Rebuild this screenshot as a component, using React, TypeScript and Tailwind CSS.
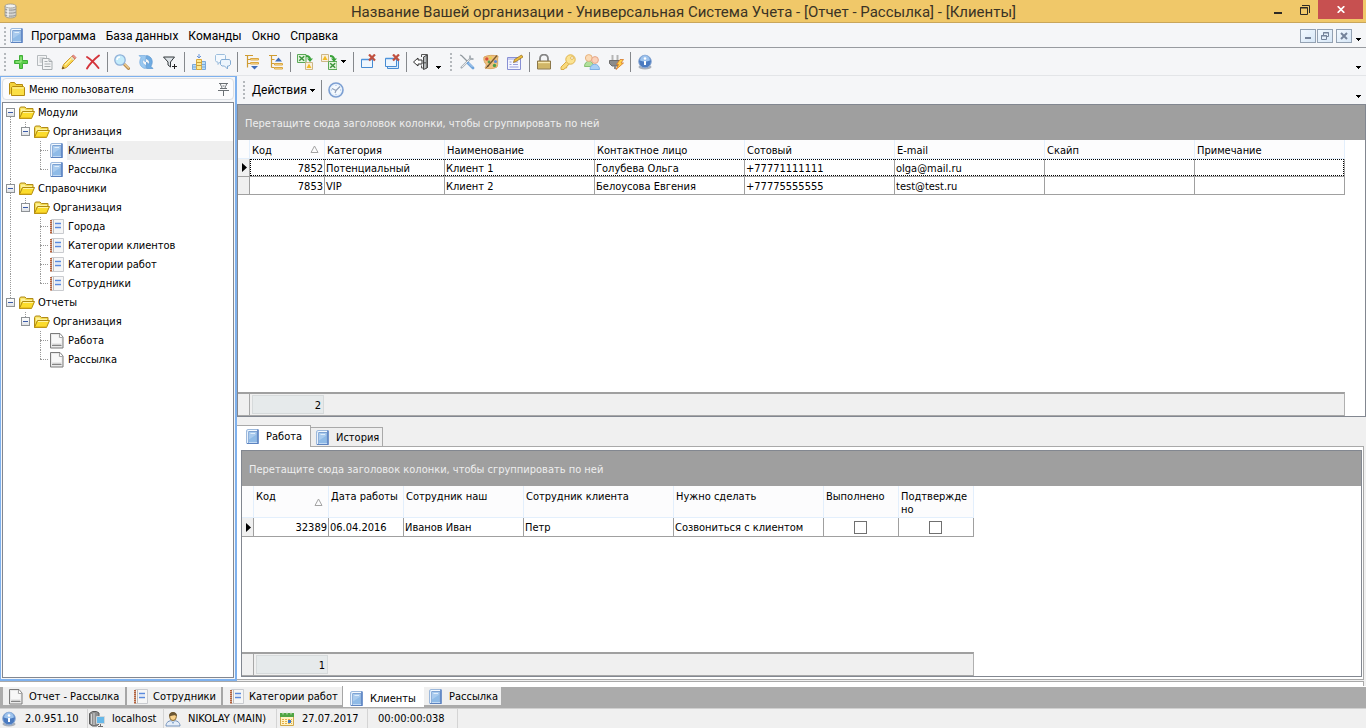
import React from "react";

type Kids = { children?: React.ReactNode };

function Ico({ children, size = 16 }: Kids & { size?: number }) {
  return (
    <svg width={size} height={size} viewBox="0 0 16 16" fill="none" aria-hidden="true" className="shrink-0">
      {children}
    </svg>
  );
}

const Book = () => (
  <Ico>
    <path d="M1.500.5h12v14h-12z" fill="#c2daf4" />
    <path d="M1.500 14.500v-13l1-1h10.500" stroke="#9db9dc" />
    <path d="M4 3h7.500v10H4z" fill="#a9cbee" />
    <path d="M4 10.500l7.500-5V13H4z" fill="#8fbbe7" />
    <path d="M3.500 2.500V14" stroke="#8fb0da" />
    <path d="M2.500 2.500V14" stroke="#e9f2fc" />
    <path d="M3 1.500h9" stroke="#f4f9fe" />
    <path d="M4 2.500h8V13" stroke="#7da2d2" />
    <path d="M5.500 4.500h4.500" stroke="#e1eefb" />
    <path d="M2 14.500h11.500" stroke="#5c83c0" />
    <path d="M13 .5v14" stroke="#4a74ba" strokeWidth="1.400" />
  </Ico>
);

const Notebook = () => (
  <Ico>
    <path d="M2.500.5h12v14h-12z" fill="#f6f6f6" stroke="#c9cbcf" />
    <path d="M2 1v14" stroke="#b5623c" strokeWidth="2" strokeDasharray="1.500 .5" />
    <path d="M4.500 1v13" stroke="#bdbdbd" />
    <path d="M6 4.500h6M6 8.500h6" stroke="#5a8ade" strokeWidth="1.400" />
    <path d="M6 6.500h6" stroke="#dfe8fa" />
  </Ico>
);

const Page = () => (
  <Ico>
    <path d="M1.500.5h9.500l3 3.500v11h-12.500z" fill="#e9e9e9" stroke="#7b7b7b" strokeLinejoin="round" />
    <path d="M3 2h6.500v3H12.500V10H3z" fill="#f8f8f8" />
    <path d="M10.500 1v3.500h3.500" fill="#fff" stroke="#a5a5a5" />
    <path d="M3.500 11h8.500v2h-8.500z" fill="#cfcfcf" />
    <path d="M3 12.500h9.500" stroke="#858585" />
  </Ico>
);

const Folder = () => (
  <Ico>
    <path d="M.5 13.500v-10l1-1.500h4.500l1.500 1.500h6.500v3.500" fill="#f4dc52" stroke="#b08a1a" />
    <path d="M2 3.500h3.500l1 1.500H13V7H2z" fill="#fdf19a" />
    <path d="M.5 13.500L3.500 6.500h12l-3 7z" fill="#fbdc2c" stroke="#b08a10" strokeLinejoin="round" />
    <path d="M4 7.500h10.200" stroke="#fff4a0" />
    <path d="M1.500 12.800h11" stroke="#e5b81c" />
  </Ico>
);

const ClosedFolder = () => (
  <Ico>
    <path d="M.5 13.500v-11l1-1h4L7 3.500h6.500v2" fill="#f3d23c" stroke="#b58a10" />
    <path d="M2.500 14.500v-8l1-1h11l1 1v8z" fill="#fbdf45" stroke="#b58a10" />
    <path d="M3.500 7h11" stroke="#fff6b0" />
  </Ico>
);

const Plus = () => (
  <Ico>
    <path d="M6.500 1.500h3v5h5v3h-5v5h-3v-5h-5v-3h5z" fill="#5fd04c" stroke="#3fae38" strokeLinejoin="round" />
    <path d="M8 3v5H3" stroke="#a5ec90" />
  </Ico>
);
const Copy = () => (
  <Ico>
    <path d="M.5 1.500h9v10h-9z" fill="#f4f5f6" stroke="#b5babd" />
    <path d="M2.500 4h5M2.500 6h3M2.500 8h3" stroke="#b5babd" />
    <path d="M5.500 4.500h6.500l3 3v8h-9.500z" fill="#f4f5f6" stroke="#a8adb0" />
    <path d="M7.500 7.500h3M7.500 10h6M7.500 12.500h6" stroke="#a8adb0" />
    <path d="M12 4.500v3h3" stroke="#a8adb0" />
  </Ico>
);
const Pencil = () => (
  <Ico>
    <path d="M1 15l1.500-4.500 8.500-8.500 3 3-8.500 8.500z" fill="#f8d64e" stroke="#cf9b33" />
    <path d="M10 3l3 3" stroke="#d8dbe0" strokeWidth="1.500" />
    <path d="M11 2l1.500-1 2.500 2.500-1 1.500z" fill="#e9938a" stroke="#d0726a" strokeWidth=".8" />
    <path d="M4 11l6.500-6.500" stroke="#fff2a8" strokeWidth="1.200" />
    <path d="M1 15l.8-2.500 1.700 1.700z" fill="#5b4420" />
  </Ico>
);
const Cross = () => (
  <Ico>
    <path d="M2 3c4 2.500 8 6.500 11.500 11M14 1.500C9.500 5 5 9.500 2 14.500" stroke="#d4343b" strokeWidth="1.900" strokeLinecap="round" />
  </Ico>
);
const Search = () => (
  <Ico>
    <path d="M10.500 10.500l4 4" stroke="#b98a48" strokeWidth="3" strokeLinecap="round" />
    <path d="M10.500 10l4 4" stroke="#efcf94" strokeWidth="1.200" strokeLinecap="round" />
    <circle cx="6" cy="6" r="5.200" fill="#c4ecfb" stroke="#8fb0d8" strokeWidth="1.300" />
    <path d="M3 6a3 3 0 013-3" stroke="#fff" strokeWidth="1.500" />
  </Ico>
);
const Refresh = () => (
  <Ico>
    <path d="M1 1.500h6.500v6.500L5.300 5.800c-1.600 1.700-.4 4.700 2.200 5.200v3.500C2.500 14 0 8.500 3.100 3.700z" fill="#9ac8f0" stroke="#79aee0" strokeWidth=".7" />
    <path d="M15 14.500H8.500V8l2.200 2.200c1.600-1.700.4-4.700-2.200-5.200V1.500c5 .5 7.500 6 4.400 10.800z" fill="#6fabe2" stroke="#5a95cf" strokeWidth=".7" />
  </Ico>
);
const Filter = () => (
  <Ico>
    <path d="M1.500 3h11L8.500 8v5L6 11V8z" fill="#dde2e6" stroke="#33383c" />
    <path d="M12.500 10v5M10 12.500h5" stroke="#222" />
  </Ico>
);
const BestFit = () => (
  <Ico>
    <path d="M8 0v4M6 2l2 2 2-2" stroke="#6a95d8" />
    <path d="M1.500 10.500h4v5h-4zM10.500 7.500h4v8h-4z" fill="#b9dcf5" stroke="#7aa9da" />
    <path d="M5.500 5.500h5v10h-5z" fill="#ffe98c" stroke="#dba93a" />
    <path d="M5.500 8.500h5M5.500 11.500h5" stroke="#c99f3f" />
    <path d="M1.500 13h4M10.500 10.500h4M10.500 13h4" stroke="#7aa9da" />
  </Ico>
);
const Chat = () => (
  <Ico>
    <path d="M1.500.5h8l1 1v5l-1 1.500H5L3 10.500V8H1.500l-1-1.500v-5z" fill="#f4f9fe" stroke="#9dbedd" />
    <path d="M6.500 5.500h8l1 1.500v3.500l-1.500 1.500h-1.500v3l-3-3H7l-1.500-1.500V7z" fill="#edf5fc" stroke="#86add4" />
  </Ico>
);
const TreeArrow = ({ up = false }: { up?: boolean }) => (
  <Ico>
    <path d="M1 1.500h8M3.500 2v11.500M3.500 5.500h3M3.500 9.500h3" stroke="#cf9c33" strokeWidth="1.200" />
    {up ? (
      <>
        <path d="M3.500 13.500h3" stroke="#cf9c33" />
        <path d="M6.500 9.500h8v1.500h-8zM6.500 13.500h8V15h-8z" fill="#ffe9a8" stroke="#dba640" />
        <path d="M7 7.500l3.500-4 3.500 4z" fill="#3f6cb8" />
      </>
    ) : (
      <>
        <path d="M6.500 4.500h8V6h-8zM6.500 8.500h8V10h-8z" fill="#ffe9a8" stroke="#dba640" />
        <path d="M7 12h7l-3.500 3.500z" fill="#3f6cb8" />
      </>
    )}
  </Ico>
);
const Sheet = ({ x, y }: { x: number; y: number }) => (
  <g transform={`translate(${x} ${y})`}>
    <path d="M.5.5h8.500v8h-8.500z" fill="#e4f5de" stroke="#5ba857" />
    <path d="M2.200 2.200l5 4.600M7.200 2.200l-5 4.600" stroke="#3c943c" strokeWidth="1.500" />
  </g>
);
const Warn = ({ x, y }: { x: number; y: number }) => (
  <g transform={`translate(${x} ${y})`}>
    <path d="M.5.5h7v7h-7z" fill="#f9f1e0" stroke="#cdb686" />
    <path d="M1.500 6l2.500-4.500L6.500 6z" fill="#f3bb22" />
  </g>
);
const Export = ({ flip = false }: { flip?: boolean }) => (
  <Ico>
    {flip ? <Warn x={0} y={0} /> : <Sheet x={0} y={0} />}
    {flip ? <Sheet x={7} y={7} /> : <Warn x={8} y={8} />}
    <path d="M9 2c3 0 4 1 4 3.500" stroke="#3ba33b" strokeWidth="2" />
    <path d="M10 4.500h6L13 8z" fill="#3ba33b" />
  </Ico>
);
const CloseWin = ({ many = false }: { many?: boolean }) => (
  <Ico>
    {many && <path d="M3.500 6.500h11v8h-11z" fill="#d8eafb" stroke="#478bd2" />}
    <path d={many ? "M1.500 4.500h11v8h-11z" : "M1.500 5.500h11v8h-11z"} fill="#eef6fe" stroke="#478bd2" />
    <path d={many ? "M1.500 4.500h11" : "M1.500 5.500h11"} stroke="#4f94dc" strokeWidth="1.500" />
    <path d="M9 .5l6 6M15 .5l-6 6" stroke="#c0503f" strokeWidth="2.200" />
  </Ico>
);
const Door = () => (
  <Ico>
    <path d="M8.500 3v-2.500h6v13.500" stroke="#555" />
    <path d="M10.500 3l3.500-2v13l-3.500 1.500z" fill="#b4b8ba" stroke="#444" />
    <path d="M8.500 11.500v2.500h2" stroke="#555" />
    <path d="M.5 8l4.500-4v2h4v4H5v2z" fill="#fff" stroke="#333" />
    <path d="M12 8v1.500" stroke="#222" />
  </Ico>
);
const Tools = () => (
  <Ico>
    <path d="M2.500 13.500L11.500 4.500" stroke="#a9b0b6" strokeWidth="2.200" strokeLinecap="round" />
    <path d="M11 1.500v3.500h3.500" stroke="#a9b0b6" strokeWidth="1.800" />
    <path d="M1 1l1.500.5 6 6" stroke="#8f979d" strokeWidth="1.300" />
    <path d="M9 9l5 5" stroke="#6fa4dc" strokeWidth="2.800" strokeLinecap="round" />
    <path d="M9.500 9l4 4" stroke="#b5d3f2" />
    <path d="M3 13l7.500-7.500" stroke="#e6e9ec" />
  </Ico>
);
const Palette = () => (
  <Ico>
    <path d="M1 3c4-2 9-2 14-1-1 4 .5 8-1 11-3 2-9 2-12 1 1-2 2-3 0-5C1 7 .5 5 1 3z" fill="#efc07e" stroke="#dba765" />
    <circle cx="3.800" cy="5" r="1.700" fill="#d9503a" />
    <circle cx="7.500" cy="4" r="1.400" fill="#e7d34a" />
    <circle cx="12.500" cy="7.500" r="1.600" fill="#5c8ad6" />
    <circle cx="11.500" cy="11.500" r="1.700" fill="#4f9f48" />
    <circle cx="6" cy="8" r="1.400" fill="#5b9a50" />
    <path d="M14 1.500L5 12" stroke="#77592f" strokeWidth="1.300" />
    <path d="M5 11l-3 4 4-3z" fill="#4b3a24" />
  </Ico>
);
const FormEdit = () => (
  <Ico>
    <path d="M.5 3.500h13v12H.5z" fill="#f5f6ff" stroke="#8890d4" />
    <path d="M1 5h12" stroke="#c9cdf1" strokeWidth="2" />
    <path d="M2.500 8h2M6 8h5M2.500 10.500h2M6 10.500h5M2.500 13h9" stroke="#9aa0da" />
    <path d="M6.500 8.500l1-3 7-4.500 1.500 2-7 4.500z" fill="#edbd39" stroke="#92691c" strokeWidth=".7" />
  </Ico>
);
const Lock = () => (
  <Ico>
    <path d="M4 7.500V4.500a4 4 0 018 0v3" stroke="#858585" strokeWidth="1.800" />
    <path d="M1.500 7h13v8h-13z" fill="#d8bf72" stroke="#8b774a" />
    <path d="M2 8.500h12" stroke="#f7e9b0" />
    <path d="M2 11h12M2 13h12" stroke="#c9ad5c" />
  </Ico>
);
const Key = () => (
  <Ico>
    <path d="M6.500 7.500L1 13v2.500h3l1-1.500h1.500l.5-2 2.500-2" fill="#f8d97c" stroke="#d9ac47" />
    <circle cx="10.500" cy="5.500" r="4.700" fill="#fbe392" stroke="#dfb34f" />
    <circle cx="12" cy="4" r="1.400" fill="#fff" stroke="#d9ac47" strokeWidth=".8" />
  </Ico>
);
const Users = () => (
  <Ico>
    <path d="M.5 12.500c0-7 9-7 9 0z" fill="#b2e09c" stroke="#86c173" />
    <circle cx="4.800" cy="4" r="3.400" fill="#fbdcb8" stroke="#e7b27f" />
    <path d="M6 15.500c0-7 9.500-7 9.500 0z" fill="#a9d0f5" stroke="#7fb0e3" />
    <circle cx="11" cy="6" r="3.400" fill="#fbd2ba" stroke="#e6a688" />
  </Ico>
);
const Plug = () => (
  <Ico>
    <path d="M4.500 1v5M9.500 1v5" stroke="#b5b5b5" strokeWidth="2" />
    <path d="M1.500 6.500h11v3l-2.500 2.500h-6L1.500 9.500z" fill="#8b8b8b" stroke="#6b6b6b" />
    <path d="M7 12v3" stroke="#8d8d8d" strokeWidth="2" />
    <path d="M12 5.500h3.500L13 9h2.500l-7.500 6.500 2.500-5H8.500z" fill="#ffd14a" stroke="#d6762a" strokeWidth=".8" />
  </Ico>
);
const Info = () => (
  <Ico>
    <ellipse cx="8" cy="13" rx="6.500" ry="2.500" fill="#a9b0ba" />
    <circle cx="8" cy="7.500" r="6.300" fill="#4a7ac0" />
    <circle cx="8" cy="7.500" r="6.300" stroke="#8aa9d4" />
    <path d="M3 6.500a5 5 0 0110 0c-3 1.500-7 1.500-10 0z" fill="#9ec4ee" />
    <circle cx="8" cy="4.500" r="1.300" fill="#fff" />
    <path d="M8 7v4" stroke="#fff" strokeWidth="2" />
  </Ico>
);
const Compass = () => (
  <Ico>
    <circle cx="8" cy="8" r="7" fill="#e6f0fb" stroke="#7c9fd2" strokeWidth="1.600" />
    <circle cx="8" cy="8" r="5" fill="#f4f9fe" />
    <path d="M8 3v1M8 12v1M3 8h1M12 8h1" stroke="#9bb9e2" />
    <path d="M12 4.500L8 8.500M4 6.500l4 2L7 11" stroke="#8f9fb8" strokeWidth="1.200" />
  </Ico>
);
const Database = () => (
  <Ico>
    <path d="M3 3v9.500c0 1.500 2 2.500 5.500 2.500S14 14 14 12.500V3z" fill="#d6d6d4" stroke="#98958b" strokeWidth=".8" />
    <path d="M3 6c1 1.500 10 1.500 11 0M3 9c1 1.500 10 1.500 11 0M3 12c1 1.500 10 1.500 11 0" stroke="#929290" />
    <path d="M6 4v10" stroke="#fff" strokeWidth="2" opacity=".6" />
    <ellipse cx="8.500" cy="3" rx="5.500" ry="2" fill="#f2f2f0" stroke="#9a988f" strokeWidth=".8" />
  </Ico>
);
const Server = () => (
  <Ico>
    <path d="M.5 2.500l3-2h4l2.500 1.500v11l-2.500 2h-4l-3-2z" fill="#8d8d8d" stroke="#5a5a5a" />
    <path d="M2.500 3v10M5 2v12" stroke="#d6d6d6" />
    <path d="M7.500 5.500h8v7h-8z" fill="#67b8e8" stroke="#d3d6d8" />
    <path d="M11.500 13v2M9 15.500h5" stroke="#6e6e6e" />
  </Ico>
);
const User = () => (
  <Ico>
    <path d="M1 15c0-4 3-5.500 7-5.500s7 1.500 7 5.500z" fill="#e4edf8" stroke="#7493bd" />
    <path d="M6.500 9.500l1.500 3 1.500-3" fill="#fff" stroke="#8eaed3" />
    <ellipse cx="8" cy="5.500" rx="3.400" ry="4" fill="#fbd28a" stroke="#8b6a33" />
    <path d="M4 5.500C3.500-.5 12.500-.5 12 5.500c-2-2.500-5-1-8 0z" fill="#6d5733" />
  </Ico>
);
const Calendar = () => (
  <Ico>
    <path d="M1.500 3.500h13v11h-13z" fill="#fff3c4" stroke="#d0a94c" />
    <path d="M1 2h14v4H1z" fill="#4fa543" />
    <path d="M4 .5v3M8 .5v3M12 .5v3" stroke="#d8e8d3" />
    <path d="M3 8.500h10M3 10.500h10M3 12.500h10" stroke="#e5ae48" strokeDasharray="2 1" />
    <path d="M9 9h3v3H9z" fill="#3f7ad0" />
  </Ico>
);
const Pin = () => (
  <svg width="11" height="13" viewBox="0 0 11 13" fill="none" aria-hidden="true">
    <path d="M1 .5h9M2.500 1c0 2 2 2.500 1 4.500M8.500 1c0 2-2 2.500-1 4.500M2 5.500h7M0 7.500h11M5.500 8v5M4.500 3h2" stroke="#6b7074" />
  </svg>
);

const Caret = ({ className = "" }: { className?: string }) => (
  <svg width="5" height="3" viewBox="0 0 5 3" aria-hidden="true" className={className}>
    <path d="M0 0h5v1H4v1H3v1H2V2H1V1H0z" fill="#000" />
  </svg>
);
const Grip = () => <span className="mx-[3px] h-[18px] w-0 shrink-0 border-l-2 border-dotted border-[#b4b8bc]" />;
const Sep = () => (
  <span className="flex w-[5px] shrink-0 justify-center">
    <span className="h-5 w-px bg-[#85888c]" />
  </span>
);

function Tool({ label, children }: Kids & { label: string }) {
  return (
    <button type="button" aria-label={label} className="flex h-6 w-6 shrink-0 items-center justify-center">
      {children}
    </button>
  );
}
const More = ({ label }: { label: string }) => (
  <button type="button" aria-label={label} className="flex h-full w-[10px] shrink-0 items-end justify-center pb-[6px]">
    <Caret />
  </button>
);

function TitleBar() {
  return (
    <header className="flex h-[23px] shrink-0 border-b border-[#c9a65b] bg-[#f0c869]">
      <span className="w-[92px] pt-[3px] pl-[2px]">
        <Database />
      </span>
      <h1 className="min-w-0 flex-1 truncate pl-[10px] text-center font-[Roboto,sans-serif] text-[15px] leading-[24px] text-[#3a3325]">
        Название Вашей организации - Универсальная Система Учета - [Отчет - Рассылка] - [Клиенты]
      </h1>
      <div className="flex shrink-0 items-start pr-[3px]">
        <button type="button" aria-label="Свернуть" className="flex h-[19px] w-[26px] items-center justify-center">
          <svg width="10" height="10" viewBox="0 0 10 10"><path d="M1 7h8v2H1z" fill="#2d2a24" /></svg>
        </button>
        <button type="button" aria-label="Восстановить" className="flex h-[19px] w-[27px] items-center justify-center">
          <svg width="10" height="10" viewBox="0 0 10 10" fill="none">
            <path d="M2 .5h7.500V8M.5 2.500h7v7h-7zM0 3h8" stroke="#2d2a24" />
          </svg>
        </button>
        <button type="button" aria-label="Закрыть" className="flex h-[19px] w-[45px] items-center justify-center bg-[#c75050]">
          <svg width="8" height="7" viewBox="0 0 8 7"><path d="M.7.2l6.600 6.600M7.300.2L.7 6.800" stroke="#fff" strokeWidth="1.700" /></svg>
        </button>
      </div>
    </header>
  );
}

const mdi = "flex h-[14px] w-4 items-center justify-center border border-[#93a1b2] bg-gradient-to-br from-[#f2f9ff] to-[#d7e7f7]";

function MenuBar() {
  return (
    <nav className="flex h-[25px] shrink-0 items-center border-b border-[#989ba0] bg-[#f5f6f8] pt-[2px] pl-px">
      <Grip />
      <Book />
      <ul className="flex flex-1 gap-[10px] pl-[6px] font-[Roboto,sans-serif] text-xs">
        {["Программа", "База данных", "Команды", "Окно", "Справка"].map((m) => (
          <li key={m}>
            <button type="button">{m}</button>
          </li>
        ))}
      </ul>
      <button type="button" aria-label="Свернуть окно" className={mdi}>
        <svg width="8" height="8" viewBox="0 0 8 8"><path d="M1 5h6v2H1z" fill="#74839a" /></svg>
      </button>
      <button type="button" aria-label="Восстановить окно" className={`${mdi} ml-px`}>
        <svg width="8" height="8" viewBox="0 0 8 8" fill="none"><path d="M2.500 3V.5h5v4H6M.5 3.500h5v4h-5zM0 4h6M2 1h6" stroke="#74839a" /></svg>
      </button>
      <button type="button" aria-label="Закрыть окно" className={`${mdi} ml-[3px]`}>
        <svg width="8" height="8" viewBox="0 0 8 8"><path d="M1 1l6 6M7 1L1 7" stroke="#74839a" strokeWidth="2" /></svg>
      </button>
      <span className="flex h-full pl-px">
        <More label="Параметры меню" />
      </span>
      <span className="w-[3px]" />
    </nav>
  );
}

function ToolBar() {
  return (
    <div className="flex h-7 shrink-0 items-center border-b border-[#e3e5e8] bg-[#f5f6f8] pl-px">
      <Grip />
      <Tool label="Добавить"><Plus /></Tool>
      <Tool label="Копировать"><Copy /></Tool>
      <Tool label="Изменить"><Pencil /></Tool>
      <Tool label="Удалить"><Cross /></Tool>
      <Sep />
      <Tool label="Поиск"><Search /></Tool>
      <Tool label="Обновить"><Refresh /></Tool>
      <Tool label="Фильтр"><Filter /></Tool>
      <Sep />
      <Tool label="Ширина колонок"><BestFit /></Tool>
      <Tool label="Комментарии"><Chat /></Tool>
      <Sep />
      <Tool label="Развернуть группы"><TreeArrow /></Tool>
      <Tool label="Свернуть группы"><TreeArrow up /></Tool>
      <Sep />
      <Tool label="Экспорт"><Export /></Tool>
      <Tool label="Импорт"><Export flip /></Tool>
      <button type="button" aria-label="Варианты импорта" className="flex h-6 w-[5px] items-center"><Caret /></button>
      <span className="w-[5px]" />
      <Sep />
      <Tool label="Закрыть окно"><CloseWin /></Tool>
      <Tool label="Закрыть все окна"><CloseWin many /></Tool>
      <Sep />
      <Tool label="Выход"><Door /></Tool>
      <More label="Кнопки панели" />
      <span className="w-1" />
      <Grip />
      <Tool label="Настройки"><Tools /></Tool>
      <Tool label="Оформление"><Palette /></Tool>
      <Tool label="Поля"><FormEdit /></Tool>
      <Sep />
      <Tool label="Блокировка"><Lock /></Tool>
      <Tool label="Пароль"><Key /></Tool>
      <Tool label="Пользователи"><Users /></Tool>
      <Tool label="Подключения"><Plug /></Tool>
      <Sep />
      <Tool label="О программе"><Info /></Tool>
      <span className="flex-1" />
      <More label="Параметры панели" />
      <span className="w-[3px]" />
    </div>
  );
}

type Node = { text: string; level: number; icon: React.ReactNode; open?: boolean; last?: boolean; first?: boolean; root?: boolean; selected?: boolean };
const nodes: Node[] = [
  { text: "Модули", level: 0, icon: <Folder />, open: true, first: true, root: true },
  { text: "Организация", level: 1, icon: <Folder />, open: true, last: true, root: true },
  { text: "Клиенты", level: 2, icon: <Book />, root: true, selected: true },
  { text: "Рассылка", level: 2, icon: <Book />, last: true, root: true },
  { text: "Справочники", level: 0, icon: <Folder />, open: true, root: true },
  { text: "Организация", level: 1, icon: <Folder />, open: true, last: true, root: true },
  { text: "Города", level: 2, icon: <Notebook />, root: true },
  { text: "Категории клиентов", level: 2, icon: <Notebook />, root: true },
  { text: "Категории работ", level: 2, icon: <Notebook />, root: true },
  { text: "Сотрудники", level: 2, icon: <Notebook />, last: true, root: true },
  { text: "Отчеты", level: 0, icon: <Folder />, open: true, last: true },
  { text: "Организация", level: 1, icon: <Folder />, open: true, last: true },
  { text: "Работа", level: 2, icon: <Page /> },
  { text: "Рассылка", level: 2, icon: <Page />, last: true },
];

const dots = "border-dotted border-[#9a9a9a]";

function Joint({ node }: { node: Node }) {
  return (
    <span className="grid h-full w-[15px] shrink-0 grid-cols-[7px_8px] grid-rows-[9px_10px]">
      <span />
      <span className={node.first ? "" : `border-l ${dots}`} />
      <span />
      <span className={`border-t ${node.last ? "" : "border-l"} ${dots}`} />
    </span>
  );
}

function Expander({ node }: { node: Node }) {
  return (
    <span className="flex h-full w-[15px] shrink-0 flex-col items-center">
      <span className={`h-[5px] w-px ${node.first ? "" : `border-l ${dots}`}`} />
      <button type="button" aria-label="Свернуть" className="flex h-[9px] w-[9px] items-center justify-center border border-[#8e9296] bg-gradient-to-b from-white to-[#dfe2e6]">
        <span className="h-px w-[5px] bg-[#3a5aa8]" />
      </button>
      <span className={`h-[5px] w-px ${node.last ? "" : `border-l ${dots}`}`} />
    </span>
  );
}

function TreeRow({ node }: { node: Node }) {
  return (
    <li className="flex h-[19px] items-center">
      {node.level > 0 && (
        <span className="flex h-full w-[15px] shrink-0 pl-[7px]">
          {node.root && <span className={`border-l ${dots}`} />}
        </span>
      )}
      {node.level > 1 && <span className="w-[15px] shrink-0" />}
      {node.open ? <Expander node={node} /> : <Joint node={node} />}
      <span className="w-px shrink-0" />
      {node.icon}
      <a href="#" className={`ml-[2px] flex h-full flex-1 items-center pl-px whitespace-nowrap ${node.selected ? "bg-[#efefef]" : ""}`}>
        {node.text}
      </a>
    </li>
  );
}

function SidePanel() {
  return (
    <aside className="flex w-[237px] shrink-0 flex-col border-2 border-l-1 border-t-1 border-[#7eb1ee] bg-[#f5f6f8] p-px">
      <div className="mb-[2px] flex h-[22px] shrink-0 items-center rounded-sm border border-[#dcdfe3] bg-[#fcfcfd] pr-1 pl-[6px]">
        <ClosedFolder />
        <h2 className="flex-1 pt-px pl-1">Меню пользователя</h2>
        <button type="button" aria-label="Закрепить"><Pin /></button>
      </div>
      <ul className="flex-1 border border-[#828790] bg-white">
        {nodes.map((n, i) => (
          <TreeRow key={i} node={n} />
        ))}
      </ul>
    </aside>
  );
}

const Marker = () => (
  <svg width="5" height="9" viewBox="0 0 5 9" aria-hidden="true" className="ml-1">
    <path d="M0 0l5 4.500L0 9z" fill="#000" />
  </svg>
);
const SortMark = () => (
  <svg width="9" height="8" viewBox="0 0 9 8" fill="none" aria-label="По возрастанию">
    <path d="M4.500 1L8 7.500H1z" stroke="#a3a3a3" />
  </svg>
);
const GroupPanel = () => (
  <p className="h-[35px] shrink-0 bg-[#9f9f9f] pl-[7px] leading-[38px] text-[#eeeeee]">
    Перетащите сюда заголовок колонки, чтобы сгруппировать по ней
  </p>
);

const th = "border-r border-b border-[#e3effc] bg-[#fcfcfd] px-[2px] text-left align-top font-normal";
const td = "border-r border-b border-[#a0a0a0] p-0";

function Summary({ count, width }: { count: string; width: string }) {
  return (
    <div className={`flex h-6 shrink-0 border-t-2 border-r border-b border-t-[#a0a0a0] border-r-[#b0b0b0] border-b-[#a8a8a8] bg-[#f0f0f0] ${width}`}>
      <span className="w-3 shrink-0 border-r border-[#a8a8a8]" />
      <span className="mt-px mb-px ml-[2px] w-[72px] border border-[#d6dadb] bg-[#e6eaeb] pr-[2px] text-right leading-[20px]">{count}</span>
    </div>
  );
}

const clientHeads = ["Категория", "Наименование", "Контактное лицо", "Сотовый", "E-mail", "Скайп", "Примечание"];
const clients = [
  ["7852", "Потенциальный", "Клиент 1", "Голубева Ольга", "+77771111111", "olga@mail.ru", "", ""],
  ["7853", "VIP", "Клиент 2", "Белоусова Евгения", "+77775555555", "test@test.ru", "", ""],
];

function ClientsGrid() {
  return (
    <section className="flex shrink-0 basis-[313px] flex-col border border-[#828790] bg-white">
      <GroupPanel />
      <table className="w-[1107px] table-fixed border-separate border-spacing-0">
        <colgroup>
          <col className="w-3" />
          <col className="w-[75px]" />
          <col className="w-[120px]" />
          {clientHeads.slice(1).map((h) => (
            <col key={h} className="w-[150px]" />
          ))}
        </colgroup>
        <thead>
          <tr className="h-[19px] leading-[22px]">
            <th className={th} />
            <th className={th}>
              <span className="flex h-[18px] items-start justify-between pr-[3px]">Код<span className="flex h-[18px] items-center"><SortMark /></span></span>
            </th>
            {clientHeads.map((h) => (
              <th key={h} className={th}>
                <span className="block h-[18px]">{h}</span>
              </th>
            ))}
          </tr>
        </thead>
        <tbody>
          {clients.map((row, r) => (
            <tr key={row[0]} className="h-[18px]">
              <td className={`${td} bg-[#f0f0f0]`}>{r === 0 && <Marker />}</td>
              {row.map((c, i) => (
                <td key={i} className={td}>
                  <span
                    className={`block h-[17px] px-px ${i === 0 ? "text-right" : ""} ${
                      r === 0 ? "border-y border-dotted border-black leading-[18px]" : "leading-[19px]"
                    } ${r === 0 && i === 0 ? "border-l" : ""} ${r === 0 && i === 7 ? "border-r" : ""}`}
                  >
                    {c}
                  </span>
                </td>
              ))}
            </tr>
          ))}
        </tbody>
      </table>
      <div className="flex-1" />
      <Summary count="2" width="w-[1107px]" />
    </section>
  );
}

const check = "block h-[13px] w-[13px] appearance-none border border-[#707070] bg-white";
const workTd = `border-r border-b border-[#a0a0a0] px-px pt-[2px] leading-4`;

function WorkGrid() {
  return (
    <section className="flex flex-1 flex-col border border-[#828790] bg-white">
      <GroupPanel />
      <table className="w-[732px] table-fixed border-separate border-spacing-0">
        <colgroup>
          <col className="w-3" />
          <col className="w-[75px]" />
          <col className="w-[75px]" />
          <col className="w-[120px]" />
          <col className="w-[150px]" />
          <col className="w-[150px]" />
          <col className="w-[75px]" />
          <col className="w-[75px]" />
        </colgroup>
        <thead>
          <tr className="h-[32px] leading-[13px]">
            <th className={th} />
            <th className={`${th} pt-1`}>
              <span className="flex justify-between pr-[3px]">Код<span className="pt-2"><SortMark /></span></span>
            </th>
            {["Дата работы", "Сотрудник наш", "Сотрудник клиента", "Нужно сделать", "Выполнено"].map((h) => (
              <th key={h} className={`${th} pt-1 whitespace-nowrap`}>{h}</th>
            ))}
            <th className={`${th} pt-1`}>Подтвержде<br />но</th>
          </tr>
        </thead>
        <tbody>
          <tr className="h-[19px]">
            <td className={`${td} bg-[#f0f0f0]`}><Marker /></td>
            <td className={`${workTd} text-right`}>32389</td>
            <td className={workTd}>06.04.2016</td>
            <td className={workTd}>Иванов Иван</td>
            <td className={workTd}>Петр</td>
            <td className={workTd}>Созвониться с клиентом</td>
            <td className={td}>
              <label className="flex justify-center pr-px"><input type="checkbox" aria-label="Выполнено" className={check} /></label>
            </td>
            <td className={td}>
              <label className="flex justify-center pr-px"><input type="checkbox" aria-label="Подтверждено" className={check} /></label>
            </td>
          </tr>
        </tbody>
      </table>
      <div className="flex-1" />
      <Summary count="1" width="w-[732px]" />
    </section>
  );
}

const wtab = "flex shrink-0 items-center bg-[#f0f0f0] pt-px whitespace-nowrap";

function WindowTabs() {
  return (
    <div className="flex h-[22px] shrink-0 items-start bg-[#ababab] bg-[linear-gradient(#fff_1px,transparent_1px)] pl-[3px]">
      <span className="flex h-[19px] pt-px">
        <button type="button" className={`${wtab} w-[124px] gap-[5px] border-r-2 border-[#a6a6a6] pl-[5px]`}><Page />Отчет - Рассылка</button>
        <button type="button" className={`${wtab} w-24 gap-1 border-r-2 border-[#a6a6a6] pl-[6px]`}><Notebook />Сотрудники</button>
        <button type="button" className={`${wtab} w-[119px] gap-1 pl-[6px]`}><Notebook />Категории работ</button>
      </span>
      <button type="button" className="flex h-[21px] w-[82px] items-center gap-[5px] border-l border-[#a6a6a6] bg-white pt-[4px] pl-[6px]"><Book />Клиенты</button>
      <span className="flex h-[19px] pt-px">
        <button type="button" className={`${wtab} w-[77px] gap-[5px] pl-1`}><Book />Рассылка</button>
      </span>
    </div>
  );
}

const cell = "flex h-full items-center border-r border-[#d4d4d4] pt-px";

function StatusBar() {
  return (
    <footer className="flex h-5 shrink-0 items-center border-t border-[#d0d0d0] bg-[#f0f0f0]">
      <span className={`${cell} w-[88px] gap-2 pl-px`}><Info />2.0.951.10</span>
      <span className={`${cell} w-[76px] gap-[7px] pl-px`}><Server />localhost</span>
      <span className={`${cell} w-[113px] gap-[7px] pl-px`}><User />NIKOLAY (MAIN)</span>
      <span className={`${cell} w-[91px] gap-[7px] pl-[2px]`}><Calendar />27.07.2017</span>
      <span className={`${cell} w-[90px] pl-[10px]`}>00:00:00:038</span>
    </footer>
  );
}

export default function App() {
  return (
    <div className="flex h-screen flex-col overflow-hidden bg-[#f0f0f0] font-['DejaVu_Sans_Condensed','DejaVu_Sans',sans-serif] text-[11px] leading-[14px] text-black">
      <TitleBar />
      <MenuBar />
      <ToolBar />
      <div className="flex min-h-0 flex-1">
        <SidePanel />
        <main className="flex min-w-0 flex-1 flex-col">
          <div className="flex h-7 shrink-0 items-center bg-[#f5f6f8] pl-[3px]">
            <Grip />
            <button type="button" className="flex h-6 items-center gap-[3px] px-1 font-[Roboto,sans-serif] text-xs">Действия<Caret /></button>
            <Sep />
            <Tool label="Время"><Compass /></Tool>
            <span className="flex-1" />
            <More label="Параметры действий" />
            <span className="w-[3px]" />
          </div>
          <ClientsGrid />
          <div className="flex shrink-0 items-end pt-2" role="tablist">
            <button type="button" role="tab" aria-selected="true" className="flex h-[22px] w-[74px] items-center gap-[5px] border-t border-r border-[#a9a9a9] bg-white pl-2"><Book />Работа</button>
            <button type="button" role="tab" aria-selected="false" className="flex h-5 w-[72px] items-center gap-[5px] border-y border-r border-[#a9a9a9] bg-[#efefef] pt-[2px] pl-1"><Book />История</button>
            <span className="h-px flex-1 bg-[#a9a9a9]" />
            <span className="w-[2px]" />
          </div>
          <div className="mr-[2px] mb-px flex min-h-0 flex-1 flex-col border-r border-b border-[#a9a9a9] bg-white pt-[3px] pr-px pb-[2px] pl-1">
            <WorkGrid />
          </div>
        </main>
      </div>
      <div className="mr-[2px] h-[5px] shrink-0 border-t border-r border-[#a9a9a9] bg-white" />
      <WindowTabs />
      <StatusBar />
    </div>
  );
}
